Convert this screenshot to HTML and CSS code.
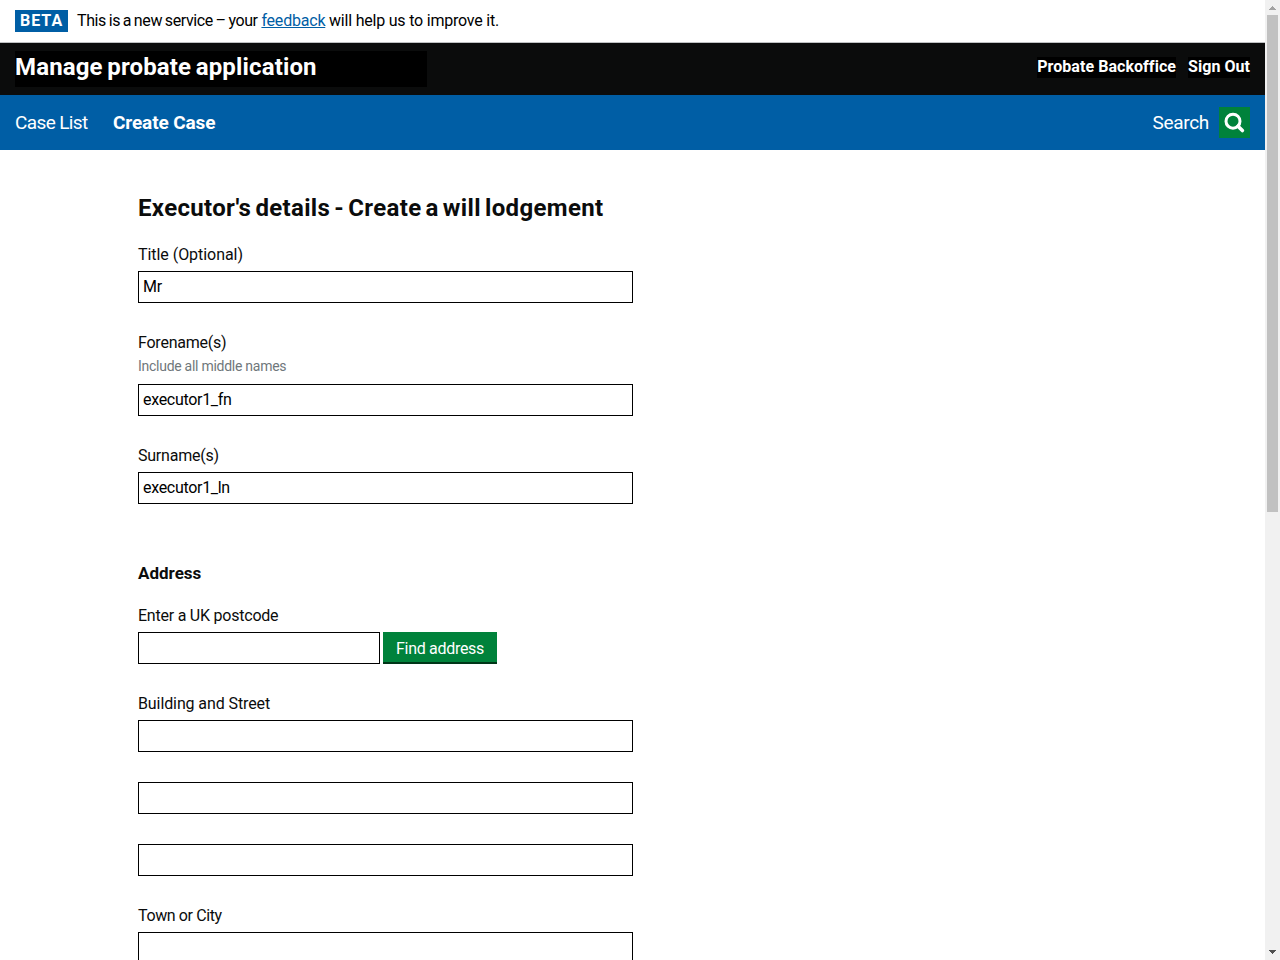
FILE: index.html
```html
<!DOCTYPE html>
<html lang="en">
<head>
<meta charset="utf-8">
<title>Create a will lodgement</title>
<link rel="stylesheet" href="styles.css">
</head>
<body>
<div class="window">
  <div class="page">
    <div class="phase-banner">
      <strong class="phase-tag">BETA</strong>
      <p class="phase-text"><span class="phase-lead">This is a new service – your</span> <a class="phase-link" href="#">feedback</a> <span>will help us to improve it.</span></p>
    </div>
    <header class="header">
      <div class="header-title">Manage probate application</div>
      <div class="header-links">
        <a class="header-link" href="#">Probate Backoffice</a>
        <a class="header-link" href="#">Sign Out</a>
      </div>
    </header>
    <nav class="nav">
      <a class="nav-link nav-list" href="#">Case List</a>
      <a class="nav-link nav-active" href="#">Create Case</a>
      <a class="nav-link nav-search" href="#">Search</a>
      <button class="search-button" aria-label="Search">
        <svg width="31" height="31" viewBox="0 0 31 31" fill="none" stroke="#fff">
          <circle cx="14" cy="14.2" r="7" stroke-width="3"/>
          <path d="M19 19.2l4.4 4.4" stroke-width="3.6" stroke-linecap="round"/>
        </svg>
      </button>
    </nav>
    <main class="main">
      <h1 class="heading">Executor's details - Create a will lodgement</h1>
      <div class="group">
        <label class="label label-wide" for="title">Title (Optional)</label>
        <input class="input" id="title" value="Mr">
      </div>
      <div class="group">
        <label class="label" for="forenames">Forename(s)</label>
        <span class="hint">Include all middle names</span>
        <input class="input" id="forenames" value="executor1_fn">
      </div>
      <div class="group">
        <label class="label" for="surnames">Surname(s)</label>
        <input class="input" id="surnames" value="executor1_ln">
      </div>
      <h2 class="subheading">Address</h2>
      <div class="group">
        <label class="label" for="postcode">Enter a UK postcode</label>
        <div class="postcode-row">
          <input class="input postcode" id="postcode">
          <button class="button">Find address</button>
        </div>
      </div>
      <div class="group">
        <label class="label label-street" for="line1">Building and Street</label>
        <input class="input" id="line1">
      </div>
      <div class="group"><input class="input" aria-label="Address line 2"></div>
      <div class="group"><input class="input" aria-label="Address line 3"></div>
      <div class="group">
        <label class="label label-town" for="town">Town or City</label>
        <input class="input" id="town">
      </div>
    </main>
  </div>
  <div class="scrollbar">
    <svg class="arrow" width="15" height="15" viewBox="0 0 15 15" shape-rendering="crispEdges"><path d="M7 6h1v1h1v1h1v1h1v1H4V9h1V8h1V7h1z" fill="#a3a3a3"/></svg>
    <div class="thumb"></div>
    <svg class="arrow arrow-down" width="15" height="15" viewBox="0 0 15 15" shape-rendering="crispEdges"><path d="M4 5h7v1h-1v1H9v1H8v1H7V8H6V7H5V6H4z" fill="#505050"/></svg>
  </div>
</div>
</body>
</html>
```
FILE: styles.css
```css
* { box-sizing: border-box; }

body {
  margin: 0;
  overflow: hidden;
  background: #fff;
  color: #0b0c0c;
  font: 16px/20px Roboto, "Liberation Sans", sans-serif;
}

a { color: inherit; text-decoration: none; }

.window {
  display: flex;
  height: 960px;
  overflow: hidden;
}

.page {
  flex: 1;
  min-width: 0;
  overflow: hidden;
}

.phase-banner {
  display: flex;
  height: 43px;
  padding: 10px 15px 0;
  border-bottom: 1px solid #bfc1c3;
}

.phase-tag {
  width: 53px;
  height: 22px;
  padding: 1px 0 0 5px;
  background: #005ea5;
  color: #fff;
  font-weight: 700;
  letter-spacing: 1px;
}

.phase-text {
  margin: 1px 0 0 9px;
  color: #000;
  letter-spacing: -0.21px;
  white-space: nowrap;
}

.phase-lead {
  letter-spacing: -0.4px;
  word-spacing: -0.8px;
}

.phase-link {
  color: #005ea5;
  text-decoration: underline;
}

.header {
  display: flex;
  justify-content: space-between;
  height: 52px;
  padding: 8px 15px;
  background: #0b0c0c;
  color: #fff;
  font-weight: 700;
}

.header-title {
  width: 412px;
  height: 36px;
  padding-top: 1px;
  background: #000;
  font-size: 24px;
  line-height: 30px;
  letter-spacing: 0.15px;
  word-spacing: -1.6px;
}

.header-links {
  display: flex;
  gap: 12px;
  padding-top: 6px;
}

.header-link {
  height: 21px;
  background: #000;
  letter-spacing: 0.05px;
}

.nav {
  display: flex;
  align-items: center;
  height: 55px;
  padding: 0 15px;
  background: #005ea5;
  color: #fff;
  font-size: 19px;
  line-height: 24px;
}

.nav-list { width: 98px; letter-spacing: -0.62px; }
.nav-active { font-weight: 700; letter-spacing: -0.12px; }
.nav-search { margin-left: auto; letter-spacing: -0.3px; }

.search-button {
  width: 31px;
  height: 31px;
  margin-left: 10px;
  padding: 0;
  border: 0;
  background: #00823b;
}

.search-button svg { display: block; }

.main {
  width: 633px;
  padding: 43px 0 0 138px;
}

.heading {
  margin: 0 0 22px;
  font-size: 24px;
  font-weight: 700;
  line-height: 30px;
  letter-spacing: 0.34px;
  word-spacing: -2.2px;
  white-space: nowrap;
}

.group { margin-bottom: 30px; }

.label {
  display: block;
  margin-bottom: 6px;
  letter-spacing: -0.23px;
}

.label-wide { letter-spacing: -0.05px; }
.label-street { letter-spacing: -0.1px; }
.label-town { letter-spacing: -0.38px; }

.hint {
  display: block;
  margin: -1px 0 10px;
  color: #6f777b;
  font-size: 14px;
  line-height: 16px;
  letter-spacing: -0.27px;
}

.input {
  display: block;
  width: 100%;
  height: 32px;
  padding: 0 4px 2px;
  border: 1px solid #000;
  border-radius: 0;
  background: #fff;
  color: #000;
  font: inherit;
  letter-spacing: -0.3px;
}

.subheading {
  margin: 59px 0 23px;
  font-size: 17px;
  font-weight: 700;
  line-height: 20px;
  letter-spacing: 0;
}

.postcode-row {
  display: flex;
  gap: 3px;
}

.postcode { width: 242px; }

.button {
  width: 114px;
  height: 32px;
  padding: 2px 0 0;
  border: 0;
  background: #00823b;
  box-shadow: inset 0 -2px 0 #003618;
  color: #fff;
  font: inherit;
  letter-spacing: -0.3px;
}

.scrollbar {
  display: flex;
  flex-direction: column;
  width: 15px;
  background: #f1f1f1;
}

.arrow { display: block; }
.arrow-down { margin-top: auto; }

.thumb {
  height: 497px;
  margin: 0 2px;
  background: #c1c1c1;
}
```
